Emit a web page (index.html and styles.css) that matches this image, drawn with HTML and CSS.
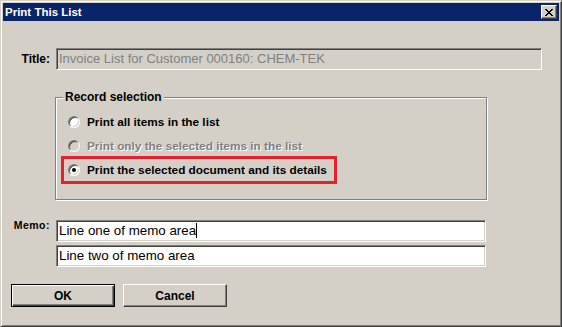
FILE: index.html
```html
<!DOCTYPE html>
<html lang="en">
<head>
    <meta charset="UTF-8">
    <title>Print This List</title>
    <link rel="stylesheet" href="styles.css">
</head>
<body>

    <div class="window">
        <div class="caption">
            <span class="caption-title">Print This List</span>
            <span class="close-btn">
                <svg width="8" height="7" viewBox="0 0 8 7" shape-rendering="crispEdges">
                    <path d="M0 0h2v1H0z M6 0h2v1H6z M1 1h2v1H1z M5 1h2v1H5z M2 2h4v1H2z M3 3h2v1H3z M2 4h4v1H2z M1 5h2v1H1z M5 5h2v1H5z M0 6h2v1H0z M6 6h2v1H6z" fill="#000"/>
                </svg>
            </span>
        </div>

        <div class="content">
            <div class="field-row">
                <span class="field-label">Title:</span>
                <div class="textbox textbox-title disabled">Invoice List for Customer 000160: CHEM-TEK</div>
            </div>

            <fieldset class="group">
                <legend>Record selection</legend>
                <div class="option">
                    <span class="radio"></span>
                    <span>Print all items in the list</span>
                </div>
                <div class="option disabled">
                    <span class="radio"></span>
                    <span>Print only the selected items in the list</span>
                </div>
                <div class="option highlight">
                    <span class="radio checked"></span>
                    <span>Print the selected document and its details</span>
                </div>
            </fieldset>

            <div class="memo-row">
                <span class="field-label memo-label">Memo:</span>
                <div class="textbox textbox-memo">Line one of memo area<span class="caret"></span></div>
            </div>
            <div class="memo-row memo-second">
                <div class="textbox textbox-memo">Line two of memo area</div>
            </div>

            <div class="buttons">
                <span class="btn btn-default">OK</span>
                <span class="btn">Cancel</span>
            </div>
        </div>
    </div>

</body>
</html>
```

FILE: styles.css
```css
* {
    box-sizing: border-box;
}
body {
    margin: 0;
    background: #d4d0c8;
    font-family: "Liberation Sans", Arial, sans-serif;
}
.window {
    width: 562px;
    height: 327px;
    background: #d4d0c8;
    border: 1px solid;
    border-color: #d4d0c8 #404040 #404040 #d4d0c8;
    box-shadow: inset 1px 1px #fff, inset -1px -1px #808080;
    padding: 2px;
    display: flex;
    flex-direction: column;
}
.caption {
    height: 18px;
    background: #0a246a;
    color: #fff;
    display: flex;
    align-items: center;
    justify-content: space-between;
    padding: 0 2px 0 2px;
}
.caption-title {
    font-weight: bold;
    font-size: 11.5px;
}
.close-btn {
    width: 16px;
    height: 14px;
    background: #d4d0c8;
    border: 1px solid;
    border-color: #fff #404040 #404040 #fff;
    box-shadow: inset -1px -1px #808080;
    display: flex;
    align-items: center;
    justify-content: center;
}

.content {
    padding: 27px 8px 0 8px;
}
.field-row, .memo-row {
    display: flex;
    align-items: center;
}
.field-label {
    width: 39px;
    margin-right: 6px;
    text-align: right;
    font-weight: bold;
    font-size: 12px;
}
.memo-label {
    align-self: flex-start;
    margin-top: -1px;
    font-size: 10.5px;
    line-height: 12px;
    letter-spacing: 0.5px;
}
.textbox {
    height: 22px;
    border: 1px solid;
    border-color: #808080 #fff #fff #808080;
    box-shadow: inset 1px 1px #404040, inset -1px -1px #d4d0c8;
    background: #fff;
    font-size: 13.33px;
    line-height: 20px;
    padding: 0 2px;
    white-space: nowrap;
    overflow: hidden;
}
.textbox.disabled {
    background: #d4d0c8;
    color: #808080;
}
.textbox-title {
    width: 486px;
    font-size: 13px;
}
.textbox-memo {
    width: 430px;
}
.caret {
    display: inline-block;
    width: 1px;
    height: 15px;
    background: #000;
    vertical-align: -3px;
}

.group {
    margin: 20px 0 0 44px;
    width: 432px;
    min-inline-size: 0;
    border: 1px solid #808080;
    box-shadow: 1px 1px #fff, inset 1px 1px #fff;
    padding: 4px 0 15px 5px;
}
.group legend {
    margin-left: 2px;
    padding: 0 2px;
    background: #d4d0c8;
    font-weight: bold;
    font-size: 12px;
    line-height: 14px;
}
.option {
    display: flex;
    align-items: center;
    width: 276px;
    height: 28px;
    border: 3px solid transparent;
    padding-left: 4px;
    font-weight: bold;
    font-size: 11.8px;
}
.option + .option {
    margin-top: -4px;
}
.option.highlight {
    border-color: #e8202a;
}
.option.disabled {
    color: #808080;
    text-shadow: 1px 1px #fff;
}
.radio {
    width: 12px;
    height: 12px;
    margin-right: 7px;
    border-radius: 50%;
    background: #fff;
    border: 1px solid;
    border-color: #808080 #fff #fff #808080;
    box-shadow: inset 1px 1px #404040, inset -1px -1px #d4d0c8;
    display: flex;
    align-items: center;
    justify-content: center;
}
.option.disabled .radio {
    background: #d4d0c8;
}
.radio.checked::after {
    content: "";
    width: 4px;
    height: 4px;
    border-radius: 50%;
    background: #000;
}

.memo-row {
    margin-top: 20px;
}
.memo-second {
    margin-top: 3px;
    padding-left: 45px;
}

.buttons {
    display: flex;
    gap: 8px;
    margin-top: 17px;
}
.btn {
    width: 104px;
    height: 23px;
    display: flex;
    align-items: center;
    justify-content: center;
    background: #d4d0c8;
    border: 1px solid;
    border-color: #fff #404040 #404040 #fff;
    box-shadow: inset -1px -1px #808080;
    font-weight: bold;
    font-size: 12px;
}
.btn-default {
    border-color: #000;
    box-shadow: inset 1px 1px #fff, inset -1px -1px #404040, inset -2px -2px #808080;
}
```
